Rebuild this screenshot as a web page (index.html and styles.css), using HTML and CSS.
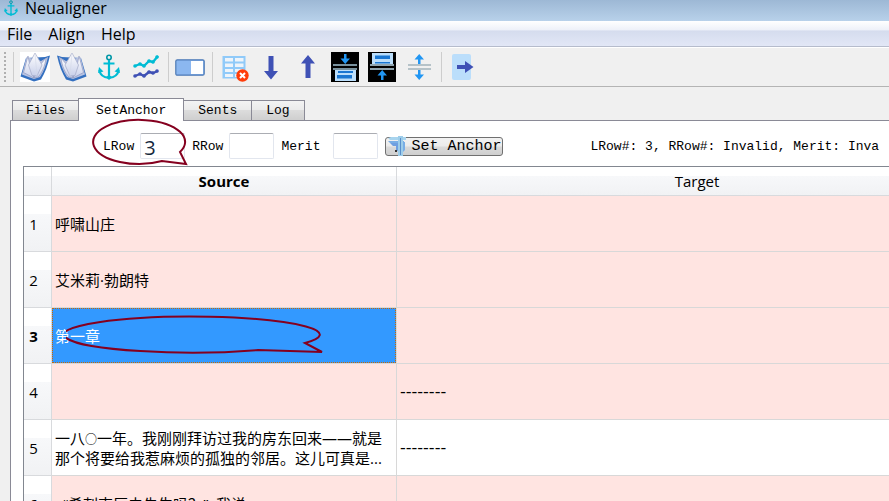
FILE: index.html
```html
<!DOCTYPE html>
<html lang="zh-CN">
<head>
<meta charset="utf-8">
<title>Neualigner</title>
<link rel="stylesheet" href="styles.css">
</head>
<body>
<svg class="defs" aria-hidden="true">
  <defs>
    <symbol id="anchor" viewBox="0 0 24 26">
      <g fill="none" stroke="#00bcd4" stroke-width="2.2">
        <circle cx="12" cy="3.5" r="2.2" stroke="#0097a7" stroke-width="1.6"/>
        <path d="M12 6v18M6.500 9.500h11"/>
        <path d="M2.500 16c.5 5 5 7.500 9.500 8 4.500-.5 9-3 9.500-8"/>
      </g>
      <path d="M1 19l1-6 4.500 4.500zM23 19l-1-6-4.500 4.500zM9 23l3 3 3-3-3-2z" fill="#00bcd4"/>
    </symbol>
    <symbol id="book" viewBox="0 0 30 30">
      <linearGradient id="page" x1="0" y1="0" x2="0" y2="1"><stop offset="0" stop-color="#fff"/><stop offset="1" stop-color="#c9d0ea"/></linearGradient>
      <path d="M6 6L.5 24.500 14 29.500 21 27.500C25 21 28 13 30 3.500L25 5z" fill="#3470c0"/>
      <path d="M6.500 5L2 22.500 14 27 20 25C24 19 26 13 28 5L21 9z" fill="#b9c3e2"/>
      <path d="M8 4L3.500 20.500 14 26 10 14z" fill="url(#page)" stroke="#8791b8" stroke-width=".6"/>
      <path d="M26 6C25 14 22 21 18 25L14 26 20 13z" fill="url(#page)" stroke="#8791b8" stroke-width=".6"/>
      <path d="M15 1L8.500 13 12 23.500 17 24 22 13z" fill="url(#page)" stroke="#a3abc8" stroke-width=".7"/>
      <path d="M15 1l2 23" fill="none" stroke="#d4d8e8" stroke-width=".6"/>
    </symbol>
  </defs>
</svg>

<header class="titlebar">
  <svg class="app-icon"><use href="#anchor"/></svg>
  <h1>Neualigner</h1>
</header>

<nav class="menubar">
  <button type="button">File</button>
  <button type="button">Align</button>
  <button type="button">Help</button>
</nav>

<div class="toolbar" role="toolbar" aria-label="Main">
  <span class="grip"></span>
  <span class="sep"></span>
  <button class="tool lit" type="button" aria-label="Open source"><svg viewBox="0 0 30 30"><use href="#book"/></svg></button>
  <button class="tool" type="button" aria-label="Open target"><svg viewBox="0 0 30 30"><use href="#book" transform="translate(30 0) scale(-1 1)"/></svg></button>
  <button class="tool" type="button" aria-label="Set anchor"><svg viewBox="0 0 30 30"><use href="#anchor" x="3" y="2" width="24" height="26"/></svg></button>
  <button class="tool" type="button" aria-label="Align">
    <svg viewBox="0 0 30 30" fill="none" stroke-width="2.400" stroke-linejoin="round">
      <path d="M4 14l5-2 4 2 5-5 4 1 5-6" stroke="#00bcd4"/>
      <path d="M4 24l5-2 4 2 5-4 4 1 5-2" stroke="#3f51b5"/>
      <g fill="#00bcd4"><circle cx="4" cy="14" r="1.800"/><circle cx="9" cy="12" r="1.800"/><circle cx="13" cy="14" r="1.800"/><circle cx="18" cy="9" r="1.800"/><circle cx="22" cy="10" r="1.800"/><circle cx="26" cy="5" r="1.800"/></g>
      <g fill="#3f51b5"><circle cx="4" cy="24" r="1.800"/><circle cx="9" cy="22" r="1.800"/><circle cx="13" cy="24" r="1.800"/><circle cx="18" cy="20" r="1.800"/><circle cx="22" cy="21" r="1.800"/><circle cx="26" cy="19" r="1.800"/></g>
    </svg>
  </button>
  <span class="sep"></span>
  <button class="tool" type="button" aria-label="Toggle pane"><svg viewBox="0 0 30 30"><rect x=".8" y="7.800" width="28.400" height="15.400" rx="1.500" fill="#8bb7f0" stroke="#4e7ab5" stroke-width="1.200"/><rect x="16" y="9" width="12" height="13" fill="#fff"/></svg></button>
  <span class="sep"></span>
  <button class="tool" type="button" aria-label="Delete table">
    <svg viewBox="0 0 30 30"><g transform="translate(2 0)"><path d="M1.500 4h23v22.500h-23z" fill="#90caf9"/><path d="M4 6h8v3.500H4zM14 6h8.500v3.500H14zM4 11.500h8V15H4zM14 11.500h8.500V15H14zM4 17h8v3H4zM14 17h8.500v3H14zM4 22h8v3H4zM14 22h8v3h-8z" fill="#eef4fa"/><circle cx="21.500" cy="23.500" r="6.200" fill="#ff3d0a"/><path d="M19 21l5 5M24 21l-5 5" stroke="#fff" stroke-width="2"/></g></svg>
  </button>
  <button class="tool" type="button" aria-label="Move down"><svg viewBox="0 0 30 30"><path d="M12.500 4h5v15H22l-7 8.500L8 19h4.500z" fill="#3f51b5"/></svg></button>
  <button class="tool" type="button" aria-label="Move up"><svg viewBox="0 0 30 30"><path d="M12.500 26h5V11.500H22L15 3l-7 8.500h4.500z" fill="#3f51b5"/></svg></button>
  <button class="tool" type="button" aria-label="Insert below">
    <svg viewBox="0 0 30 30"><path d="M1 0h28v30H1z"/><path d="M14 2h2.500v4.500h3.500l-4.800 5.500-4.700-5.500H14z" fill="#2196f3"/><path d="M3 12h24v2H3zM3 16h24v2H3z" fill="#78909c"/><path d="M5 18h21v11H5z" fill="#bbdefb"/><path d="M8 19h15v2H8zM7 23h15v3.500H7z" fill="#1976d2"/></svg>
  </button>
  <button class="tool" type="button" aria-label="Insert above">
    <svg viewBox="0 0 30 30"><path d="M1 0h28v30H1z"/><path d="M14 28h2.500v-4.500h3.500L15.200 18l-4.700 5.500H14z" fill="#2196f3"/><path d="M3 12h24v2H3zM3 16h24v2H3z" fill="#90a4ae"/><path d="M5 1h21v11H5z" fill="#bbdefb"/><path d="M8 10h15v1.500H8zM8 3.500h15V7H8z" fill="#1976d2"/></svg>
  </button>
  <button class="tool" type="button" aria-label="Split">
    <svg viewBox="0 0 30 30"><path d="M4 12h23v2H4zM4 16h23v2H4z" fill="#b5c2c8"/><path d="M14 12V7.500h-3.500L15.200 2 20 7.500h-3.500V12zM14 18v4.500h-3.500l4.700 5.500 4.800-5.500h-3.500V18z" fill="#2196f3"/></svg>
  </button>
  <span class="sep"></span>
  <button class="tool" type="button" aria-label="Export"><svg viewBox="0 0 30 30"><rect x="4" y="2" width="19" height="26" rx="2" fill="#bbdefb"/><path d="M9 13h8V9l8.500 6-8.500 6v-4H9z" fill="#3f51b5"/></svg></button>
</div>

<main>
  <div class="tabs" role="tablist">
    <button type="button" role="tab">Files</button>
    <button type="button" role="tab" aria-selected="true">SetAnchor</button>
    <button type="button" role="tab">Sents</button>
    <button type="button" role="tab">Log</button>
  </div>
  <section class="panel">
    <form class="form">
      <div class="field">
        <label for="lrow">LRow</label><input id="lrow" type="text" value="3">
        <svg class="callout" viewBox="0 0 96 48"><path d="M70 43A46 22 0 1 1 88 34L94 46Z"/></svg>
      </div>
      <div class="field"><label for="rrow">RRow</label><input id="rrow" type="text"></div>
      <div class="field wide"><label for="merit">Merit</label><input id="merit" type="text"></div>
      <button class="set" type="button">
        <svg viewBox="0 0 20 20"><path d="M1 2l3-1h15v3H3z" fill="#a8d4ee"/><path d="M1 5h16v2H3z" fill="#79aee6"/><path d="M3 7h9v9l-3-2v-4H6z" fill="#6f9fe0"/><path d="M16 6h2v8l-2 2z" fill="#79aee6"/><path d="M11 0h5v20h-5z" fill="#9dcdea"/><path d="M13 2h1v17h-1z" fill="#5b8fcb"/><path d="M8 14h2v2H8z" fill="#333"/></svg>Set Anchor
      </button>
      <output class="status">LRow#: 3, RRow#: Invalid, Merit: Inva</output>
    </form>
    <div class="grid">
      <table>
        <colgroup><col class="c-num"><col class="c-src"><col></colgroup>
        <thead><tr><th></th><th class="current">Source</th><th>Target</th></tr></thead>
        <tbody>
          <tr><th>1</th><td>呼啸山庄</td><td></td></tr>
          <tr><th>2</th><td>艾米莉·勃朗特</td><td></td></tr>
          <tr><th class="current">3</th><td class="selected">第一章<svg class="callout" viewBox="0 0 260 40"><path d="M192 35A128 18 0 1 1 239 28L256 37Z"/></svg></td><td></td></tr>
          <tr><th>4</th><td></td><td class="blank">--------</td></tr>
          <tr class="matched"><th>5</th><td>一八<span class="zero">○</span>一年。我刚刚拜访过我的房东回来——就是<br>那个将要给我惹麻烦的孤独的邻居。这儿可真是...</td><td class="blank">--------</td></tr>
          <tr><th>6</th><td>&nbsp;&nbsp;“希刺克厉夫先生吗？”&nbsp;&nbsp;我说</td><td></td></tr>
        </tbody>
      </table>
    </div>
  </section>
</main>
</body>
</html>
```
FILE: styles.css
```css
* { box-sizing: border-box; }

body {
  margin: 0;
  height: 100vh;
  overflow: hidden;
  display: flex;
  flex-direction: column;
  background: #f0f0f0;
  color: #000;
  font: 16px "Open Sans", "Noto Sans CJK SC", sans-serif;
}

button, input { font: inherit; color: inherit; margin: 0; }
.defs { position: absolute; width: 0; height: 0; }

.titlebar {
  flex: none;
  height: 21px;
  display: flex;
  align-items: center;
  gap: 6px;
  padding: 0 3px 6px;
  background: linear-gradient(#9db8d5, #b8d1ea);
}
.titlebar h1 { margin: 0; font-size: 16px; font-weight: 400; line-height: 16px; }
.app-icon { width: 16px; height: 16px; }

.menubar {
  flex: none;
  height: 26px;
  display: flex;
  gap: 16px;
  padding: 0 7px;
  background: linear-gradient(#fff, #eef1f9 35%, #d5dcee 40%, #e2e7f6);
  border-bottom: 1px solid #b6bccc;
}
.menubar button { padding: 0; border: 0; background: none; line-height: 24px; }

.toolbar {
  flex: none;
  height: 40px;
  display: flex;
  align-items: center;
  gap: 7px;
  padding: 0 4px;
  border-top: 1px solid #fff;
  border-bottom: 1px solid #b4b4b4;
}
.tool { flex: none; width: 30px; height: 30px; padding: 0; border: 0; background: none; }
.tool svg { display: block; width: 30px; height: 30px; }
.tool.lit { background: #fff; }
.sep { flex: none; width: 1px; height: 30px; margin-right: -1px; background: #cdcdcd; }
.grip { width: 2px; height: 30px; background: repeating-linear-gradient(#b0b0b0 0 2px, transparent 2px 4px); }

main { flex: 1; min-height: 0; display: flex; flex-direction: column; padding: 11px 0 0 10px; }

.tabs { flex: none; display: flex; align-items: flex-end; padding-left: 2px; font: 13px "Liberation Mono", monospace; }
.tabs button {
  height: 20px;
  margin-right: -1px;
  padding: 0 14px;
  border: 1px solid #8a8a96;
  border-bottom: 0;
  background: linear-gradient(#f3f3f3, #ebebeb 45%, #dcdcdc 50%, #cfcfcf);
}
.tabs button:first-child { padding: 0 13px; }
.tabs [aria-selected="true"] {
  position: relative;
  height: 23px;
  margin-bottom: -1px;
  padding: 0 17px;
  background: #fff;
}

.panel {
  flex: 1;
  min-height: 0;
  display: flex;
  flex-direction: column;
  padding-left: 12px;
  background: #fff;
  border: 1px solid #8a8a96;
  border-width: 1px 0 0 1px;
}

.form {
  flex: none;
  height: 45px;
  display: flex;
  align-items: center;
  gap: 7px;
  padding: 5px 0 0 80px;
  font: 13px "Liberation Mono", monospace;
  white-space: nowrap;
}
.field { position: relative; display: flex; align-items: center; gap: 6px; }
.field.wide { gap: 13px; }
.field input {
  width: 45px;
  height: 26px;
  padding: 2px 3px 0;
  border: 1px solid #e2e6ee;
  border-top-color: #abadb3;
  border-radius: 2px;
  background: #fff;
}
#lrow { font: 20px "Open Sans", sans-serif; color: #14283c; }
.set {
  height: 19px;
  display: flex;
  align-items: center;
  gap: 4px;
  padding: 0 1px;
  border: 1px solid #707070;
  border-radius: 3px;
  background: linear-gradient(#f2f2f2, #ebebeb 48%, #dadada 52%, #cfcfcf);
  font-size: 15px;
}
.set svg { width: 20px; height: 20px; }
.status { margin-left: 80px; }

.callout { position: absolute; z-index: 1; fill: none; stroke: #85001f; stroke-width: 2; pointer-events: none; }
.field .callout { left: -11px; top: -15px; width: 96px; height: 48px; }
.selected .callout { left: 14px; top: 7px; width: 260px; height: 40px; }

.grid {
  flex: 1;
  min-height: 0;
  overflow: hidden;
  border: 1px solid #828790;
  border-width: 1px 0 0 1px;
}
table { width: 100%; border-collapse: separate; border-spacing: 0; table-layout: fixed; }
.c-num { width: 28px; }
.c-src { width: 345px; }
th, td { padding: 0; font-size: 15px; font-weight: 400; }
th { background: linear-gradient(#fff 33%, #f7f8fa 33%, #f1f2f4); border: 1px solid #d8dadd; border-width: 0 1px 1px 0; }
th.current { font-weight: 700; }
thead th { height: 29px; line-height: 20px; }
thead th:last-child { padding-left: 108px; }
tbody th { padding-right: 8px; }
tbody tr { height: 56px; }
td {
  position: relative;
  padding: 0 3px;
  background: #ffe4e1;
  border: 1px solid #d8d8d8;
  border-width: 0 1px 1px 0;
  line-height: 20px;
  white-space: nowrap;
}
th:last-child, td:last-child { border-right: 0; }
.matched td { background: #fff; }
td.selected { background: #3399ff; background-clip: padding-box; color: #fff; }
td.selected::after {
  content: "";
  position: absolute;
  inset: 0;
  border: 1px dotted #cc6600;
}
.blank { font-family: "DejaVu Sans", sans-serif; font-size: 16px; }
.zero { font-size: 12px; line-height: 1px; }
```
